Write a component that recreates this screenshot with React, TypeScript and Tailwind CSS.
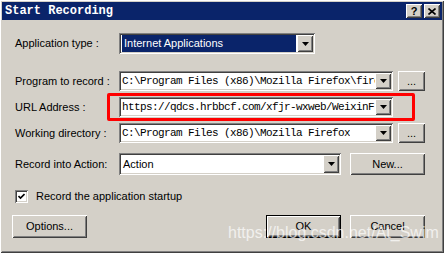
import React from "react";

const sunken =
  "shadow-[inset_1px_1px_#808080,inset_-1px_-1px_#ffffff,inset_2px_2px_#404040,inset_-2px_-2px_#d4d0c8]";
const raised =
  "shadow-[inset_1px_1px_#ffffff,inset_-1px_-1px_#404040,inset_2px_2px_#d4d0c8,inset_-2px_-2px_#808080]";

const sans = { fontFamily: '"Liberation Sans", Arial, sans-serif' };
const mono = { fontFamily: '"Liberation Mono", "Courier New", monospace' };

function Arrow() {
  return (
    <svg width="7" height="4" viewBox="0 0 7 4">
      <path d="M0 0H7L3.5 4Z" fill="#000" />
    </svg>
  );
}

function Combo({
  width,
  height = 20,
  children,
  highlight = false,
}: {
  width: string;
  height?: number;
  children: React.ReactNode;
  highlight?: boolean;
}) {
  return (
    <div
      className={`flex bg-white p-[2px] ${sunken} ${width}`}
      style={{ height }}
    >
      <div className="flex min-w-0 flex-1 items-center overflow-hidden whitespace-nowrap">
        {highlight ? (
          <div className="m-[1px] flex h-full flex-1 items-center bg-[#0a246a] pl-[2px] text-[11px] text-white" style={sans}>
            {children}
          </div>
        ) : (
          children
        )}
      </div>
      <div className={`flex w-[16px] shrink-0 items-center justify-center bg-[#d4d0c8] ${raised}`}>
        <Arrow />
      </div>
    </div>
  );
}

function Btn({
  w,
  h = 23,
  children,
  def = false,
}: {
  w: string;
  h?: number;
  children: React.ReactNode;
  def?: boolean;
}) {
  return (
    <div
      className={`flex items-center justify-center bg-[#d4d0c8] text-[11px] text-black ${w} ${
        def ? "border border-black" : ""
      }`}
      style={{ height: h, ...sans }}
    >
      <div className={`flex h-full w-full items-center justify-center ${raised}`}>{children}</div>
    </div>
  );
}

function Label({ children }: { children: React.ReactNode }) {
  return (
    <div className="w-[104px] shrink-0 text-[11px] text-black" style={sans}>
      {children}
    </div>
  );
}

function MonoText({ children }: { children: React.ReactNode }) {
  return (
    <span className="min-w-0 overflow-hidden pl-[1px] text-[11px] leading-none tracking-[-0.6px] text-black" style={mono}>
      {children}
    </span>
  );
}

export default function App() {
  return (
    <div className="h-[253px] w-[444px] overflow-hidden bg-white">
      <div
        className={`relative flex h-[253px] w-[444px] flex-col bg-[#d4d0c8] p-[2px] ${raised}`}
      >
        {/* Title bar */}
        <div className="flex h-[18px] items-center justify-between bg-[#0a246a] pl-[3px] pr-[2px]">
          <span className="text-[12px] font-bold text-white" style={mono}>
            Start Recording
          </span>
          <div className="flex gap-[2px]">
            <div
              className={`flex h-[14px] w-[16px] items-center justify-center bg-[#d4d0c8] text-[11px] font-bold leading-none text-black ${raised}`}
              style={sans}
            >
              ?
            </div>
            <div className={`flex h-[14px] w-[16px] items-center justify-center bg-[#d4d0c8] ${raised}`}>
              <svg width="8" height="7" viewBox="0 0 8 7">
                <path d="M0.5 0.5L7.5 6.5M7.5 0.5L0.5 6.5" stroke="#000" strokeWidth="1.6" />
              </svg>
            </div>
          </div>
        </div>

        {/* Body */}
        <div className="flex flex-col pl-[13px]">
          <div className="mt-[13px] flex items-center">
            <Label>Application type :</Label>
            <Combo width="w-[196px]" height={21} highlight>
              Internet Applications
            </Combo>
          </div>

          <div className="mt-[17px] flex items-center">
            <Label>Program to record :</Label>
            <Combo width="w-[274px]">
              <MonoText>C:\Program Files (x86)\Mozilla Firefox\fire</MonoText>
            </Combo>
            <div className="ml-[5px]">
              <Btn w="w-[27px]" h={20}>
                ...
              </Btn>
            </div>
          </div>

          <div className="mt-[6px] flex items-center">
            <Label>URL Address :</Label>
            <Combo width="w-[274px]">
              <MonoText>https://qdcs.hrbbcf.com/xfjr-wxweb/WeixinFr</MonoText>
            </Combo>
          </div>

          <div className="mt-[6px] flex items-center">
            <Label>Working directory :</Label>
            <Combo width="w-[274px]">
              <MonoText>C:\Program Files (x86)\Mozilla Firefox</MonoText>
            </Combo>
            <div className="ml-[5px]">
              <Btn w="w-[27px]" h={20}>
                ...
              </Btn>
            </div>
          </div>

          <div className="mt-[10px] flex items-center">
            <Label>Record into Action:</Label>
            <Combo width="w-[222px]" height={22}>
              <span className="pl-[2px] text-[11px] text-black" style={sans}>
                Action
              </span>
            </Combo>
            <div className="ml-[9px]">
              <Btn w="w-[75px]" h={22}>
                New...
              </Btn>
            </div>
          </div>

          <div className="mt-[13px] flex items-center">
            <div className={`flex h-[13px] w-[13px] items-center justify-center bg-white ${sunken}`}>
              <svg width="7" height="7" viewBox="0 0 7 7">
                <path d="M0.5 3L2.5 5L6.5 1" stroke="#000" strokeWidth="1.6" fill="none" />
              </svg>
            </div>
            <span className="ml-[8px] text-[11px] text-black" style={sans}>
              Record the application startup
            </span>
          </div>
        </div>

        <div className="mt-[10px] flex items-center pl-[10px]">
          <Btn w="w-[75px]">Options...</Btn>
          <div className="ml-auto flex gap-[9px] pr-[17px]">
            <Btn w="w-[75px]" def>
              OK
            </Btn>
            <Btn w="w-[75px]">Cancel</Btn>
          </div>
        </div>

        {/* Red annotation */}
        <div className="pointer-events-none absolute left-[107px] top-[93px] h-[28px] w-[308px] rounded-[2px] border-[3px] border-[#ff0000]" />

        {/* Watermark */}
        <div
          className="pointer-events-none absolute left-[228px] top-[221px] text-[16px] text-white/70"
          style={sans}
        >
          https://blog.csdn.net/At_Swim
        </div>
      </div>
    </div>
  );
}
